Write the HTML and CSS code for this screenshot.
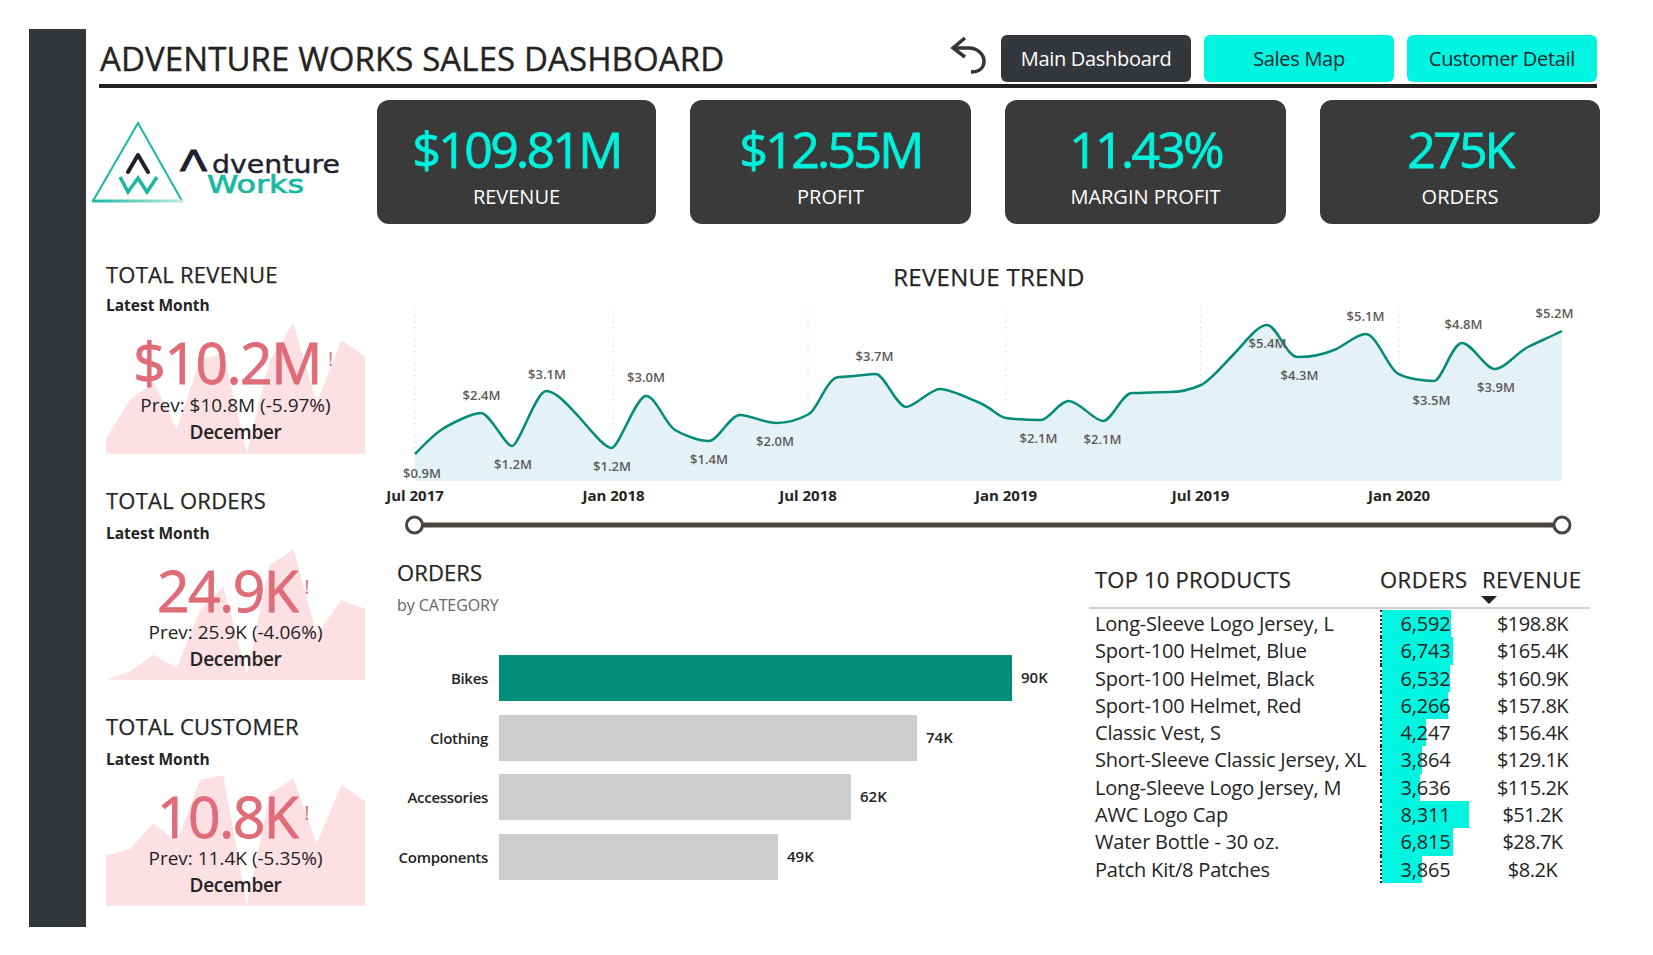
FILE: index.html
```html
<!DOCTYPE html>
<html>
<head>
    <meta charset="utf-8">
    <title>Adventure Works Sales Dashboard</title>
    <link rel="stylesheet" href="styles.css">
</head>
<body>
    <div class="sidebar"></div>
    <div class="main">
        <div class="header">
            <div class="title">ADVENTURE WORKS SALES DASHBOARD</div>
            <svg class="back" viewBox="0 0 36 37">
                <path d="M15 1 L3 11 L15 20 M3 11 H19 C28 11 34 18 34 24 C34 30 30 35 21 35"/>
            </svg>
            <div class="btn btn_dark">Main Dashboard</div>
            <div class="btn">Sales Map</div>
            <div class="btn">Customer Detail</div>
        </div>

        <div class="cards">
            <svg class="logo" viewBox="90 115 255 90">
                <defs>
                    <linearGradient id="logo_fade" x1="0" x2="1" y1="0" y2="0">
                        <stop offset="0" stop-color="#18b8a2"/>
                        <stop offset="1" stop-color="#bfe9e2"/>
                    </linearGradient>
                </defs>
                <path class="logo_tri" d="M93 201 L138 123 L182 201"/>
                <rect x="92" y="199.5" width="91" height="3" fill="url(#logo_fade)"/>
                <path class="logo_dark" d="M128 172 L138 155 L148 172"/>
                <path class="logo_teal" d="M120 177 L128 192 L138 178 L147 192 L157 177"/>
                <text class="logo_big" x="180" y="171" textLength="27" lengthAdjust="spacingAndGlyphs">Λ</text>
                <text class="logo_adv" x="212" y="173" textLength="128" lengthAdjust="spacingAndGlyphs">dventure</text>
                <text class="logo_works" x="207" y="193" textLength="97" lengthAdjust="spacingAndGlyphs">Works</text>
            </svg>
            <div class="card"><div class="card_value">$109.81M</div><div class="card_label">REVENUE</div></div>
            <div class="card"><div class="card_value">$12.55M</div><div class="card_label">PROFIT</div></div>
            <div class="card"><div class="card_value">11.43%</div><div class="card_label">MARGIN PROFIT</div></div>
            <div class="card"><div class="card_value">275K</div><div class="card_label">ORDERS</div></div>
        </div>

        <div class="content">
            <div class="tiles">
                <div class="tile">
                    <div class="tile_title">TOTAL REVENUE</div>
                    <div class="tile_sub">Latest Month</div>
                    <div class="spark">
                        <svg viewBox="48 219 777 393" preserveAspectRatio="none"><polygon points="48,611 48,565 120,450 190,395 260,537 330,330 400,310 470,610 540,330 610,220 680,460 755,270 825,320 825,611"/></svg>
                        <div class="tile_value">$10.2M<span class="warn">!</span></div>
                        <div class="tile_prev">Prev: $10.8M (-5.97%)</div>
                        <div class="tile_month">December</div>
                    </div>
                </div>
                <div class="tile">
                    <div class="tile_title">TOTAL ORDERS</div>
                    <div class="tile_sub">Latest Month</div>
                    <div class="spark">
                        <svg viewBox="48 207 777 391" preserveAspectRatio="none"><polygon points="48,597 120,573 190,523 260,562 330,390 400,320 470,580 540,255 610,208 680,460 755,360 825,385 825,597"/></svg>
                        <div class="tile_value">24.9K<span class="warn">!</span></div>
                        <div class="tile_prev">Prev: 25.9K (-4.06%)</div>
                        <div class="tile_month">December</div>
                    </div>
                </div>
                <div class="tile">
                    <div class="tile_title">TOTAL CUSTOMER</div>
                    <div class="tile_sub">Latest Month</div>
                    <div class="spark">
                        <svg viewBox="48 886 777 392" preserveAspectRatio="none"><polygon points="48,1277 48,1127 120,1108 190,1030 260,1085 330,900 400,887 470,1275 540,940 610,897 680,1090 755,915 825,965 825,1277"/></svg>
                        <div class="tile_value">10.8K<span class="warn">!</span></div>
                        <div class="tile_prev">Prev: 11.4K (-5.35%)</div>
                        <div class="tile_month">December</div>
                    </div>
                </div>
            </div>

            <div class="right">
                <div class="trend_title">REVENUE TREND</div>
                <svg class="trend" viewBox="380 295 1220 240">
                    <g class="grid">
                        <line x1="415" x2="415" y1="309" y2="481"/>
                        <line x1="613.5" x2="613.5" y1="309" y2="481"/>
                        <line x1="808" x2="808" y1="309" y2="481"/>
                        <line x1="1006" x2="1006" y1="309" y2="481"/>
                        <line x1="1200.5" x2="1200.5" y1="309" y2="481"/>
                        <line x1="1399" x2="1399" y1="309" y2="481"/>
                    </g>
                    <path class="area" d="M415 454 C425 444 432 436 441 430 S472 413 481 413 S505 446 512 446 S536 391 546 391 S568 405 579 417 S604 448 611.5 448 S636 396 646 396 S665 424 675 430 S700 441 709 441 S730 415 740 415 S765 423 776 423 S800 419 809 414 S827 377 839 377 S868 374 876 374 S897 407 906 407 S930 389 940 389 S968 398 980 403 S998 417 1006 418 S1033 420 1041 420 S1059 401 1069 401 S1094 421 1103 421 S1122 393 1132 393 S1160 392 1170 392 S1192 389 1201 385 S1222 366 1233 355 S1257 325 1267 325 S1286 357 1298 357 S1322 355 1334 350 S1356 334 1366 334 S1388 367 1397 373 S1426 381 1434 381 S1452 343 1462 343 S1485 369 1495 369 S1516 353 1528 347 S1550 337 1562 331 L1562 481 L415 481 Z"/>
                    <path class="line" d="M415 454 C425 444 432 436 441 430 S472 413 481 413 S505 446 512 446 S536 391 546 391 S568 405 579 417 S604 448 611.5 448 S636 396 646 396 S665 424 675 430 S700 441 709 441 S730 415 740 415 S765 423 776 423 S800 419 809 414 S827 377 839 377 S868 374 876 374 S897 407 906 407 S930 389 940 389 S968 398 980 403 S998 417 1006 418 S1033 420 1041 420 S1059 401 1069 401 S1094 421 1103 421 S1122 393 1132 393 S1160 392 1170 392 S1192 389 1201 385 S1222 366 1233 355 S1257 325 1267 325 S1286 357 1298 357 S1322 355 1334 350 S1356 334 1366 334 S1388 367 1397 373 S1426 381 1434 381 S1452 343 1462 343 S1485 369 1495 369 S1516 353 1528 347 S1550 337 1562 331"/>
                    <g class="point">
                        <text x="422" y="478">$0.9M</text>
                        <text x="481.5" y="400">$2.4M</text>
                        <text x="513" y="469">$1.2M</text>
                        <text x="547" y="379">$3.1M</text>
                        <text x="612" y="471">$1.2M</text>
                        <text x="646" y="382">$3.0M</text>
                        <text x="709" y="464">$1.4M</text>
                        <text x="775" y="446">$2.0M</text>
                        <text x="874.5" y="361">$3.7M</text>
                        <text x="1038.5" y="443">$2.1M</text>
                        <text x="1102.5" y="444">$2.1M</text>
                        <text x="1267.5" y="348">$5.4M</text>
                        <text x="1299.5" y="380">$4.3M</text>
                        <text x="1365.5" y="321">$5.1M</text>
                        <text x="1431.5" y="405">$3.5M</text>
                        <text x="1463.5" y="329">$4.8M</text>
                        <text x="1496" y="392">$3.9M</text>
                        <text x="1554.5" y="318">$5.2M</text>
                    </g>
                    <g class="axis">
                        <text x="415" y="501">Jul 2017</text>
                        <text x="613.5" y="501">Jan 2018</text>
                        <text x="808" y="501">Jul 2018</text>
                        <text x="1006" y="501">Jan 2019</text>
                        <text x="1200.5" y="501">Jul 2019</text>
                        <text x="1399" y="501">Jan 2020</text>
                    </g>
                    <line class="slider" x1="415" x2="1562" y1="525" y2="525"/>
                    <circle class="knob" cx="414.5" cy="525" r="8"/>
                    <circle class="knob" cx="1562" cy="525" r="8"/>
                </svg>

                <div class="bottom">
                    <div class="orders">
                        <div class="orders_title">ORDERS</div>
                        <div class="orders_sub">by CATEGORY</div>
                        <div class="bars">
                            <div class="bar_row"><span class="bar_label">Bikes</span><span class="bar bar_on" style="width: 513px;"></span><span class="bar_value">90K</span></div>
                            <div class="bar_row"><span class="bar_label">Clothing</span><span class="bar" style="width: 418px;"></span><span class="bar_value">74K</span></div>
                            <div class="bar_row"><span class="bar_label">Accessories</span><span class="bar" style="width: 352px;"></span><span class="bar_value">62K</span></div>
                            <div class="bar_row"><span class="bar_label">Components</span><span class="bar" style="width: 279px;"></span><span class="bar_value">49K</span></div>
                        </div>
                    </div>

                    <div class="products">
                        <div class="prod_head">
                            <div class="prod_name">TOP 10 PRODUCTS</div>
                            <div class="prod_orders">ORDERS</div>
                            <div class="prod_rev">REVENUE<i class="caret"></i></div>
                        </div>
                        <div class="prod_body">
                            <div class="prod_row"><div class="prod_name">Long-Sleeve Logo Jersey, L</div><div class="prod_orders"><i class="fill" style="width: 79.3%;"></i><b>6,592</b></div><div class="prod_rev">$198.8K</div></div>
                            <div class="prod_row"><div class="prod_name">Sport-100 Helmet, Blue</div><div class="prod_orders"><i class="fill" style="width: 81.1%;"></i><b>6,743</b></div><div class="prod_rev">$165.4K</div></div>
                            <div class="prod_row"><div class="prod_name">Sport-100 Helmet, Black</div><div class="prod_orders"><i class="fill" style="width: 78.6%;"></i><b>6,532</b></div><div class="prod_rev">$160.9K</div></div>
                            <div class="prod_row"><div class="prod_name">Sport-100 Helmet, Red</div><div class="prod_orders"><i class="fill" style="width: 75.4%;"></i><b>6,266</b></div><div class="prod_rev">$157.8K</div></div>
                            <div class="prod_row"><div class="prod_name">Classic Vest, S</div><div class="prod_orders"><i class="fill" style="width: 51.1%;"></i><b>4,247</b></div><div class="prod_rev">$156.4K</div></div>
                            <div class="prod_row"><div class="prod_name">Short-Sleeve Classic Jersey, XL</div><div class="prod_orders"><i class="fill" style="width: 46.5%;"></i><b>3,864</b></div><div class="prod_rev">$129.1K</div></div>
                            <div class="prod_row"><div class="prod_name">Long-Sleeve Logo Jersey, M</div><div class="prod_orders"><i class="fill" style="width: 43.8%;"></i><b>3,636</b></div><div class="prod_rev">$115.2K</div></div>
                            <div class="prod_row"><div class="prod_name">AWC Logo Cap</div><div class="prod_orders"><i class="fill" style="width: 100%;"></i><b>8,311</b></div><div class="prod_rev">$51.2K</div></div>
                            <div class="prod_row"><div class="prod_name">Water Bottle - 30 oz.</div><div class="prod_orders"><i class="fill" style="width: 82%;"></i><b>6,815</b></div><div class="prod_rev">$28.7K</div></div>
                            <div class="prod_row"><div class="prod_name">Patch Kit/8 Patches</div><div class="prod_orders"><i class="fill" style="width: 46.5%;"></i><b>3,865</b></div><div class="prod_rev">$8.2K</div></div>
                        </div>
                    </div>
                </div>
            </div>
        </div>
    </div>
</body>
</html>
```

FILE: styles.css
```css
body {
    font-family: "Open Sans", "Noto Sans", sans-serif;
    color: #252423;
    background: #fff;
    margin: 0;
    padding: 29px 0 0 29px;
    display: flex;
    overflow: hidden;
}
.sidebar {
    width: 57px;
    height: 898px;
    background: #33363b;
    flex: none;
}
.main {
    width: 1501px;
    margin-left: 13px;
}

/* header */
.header {
    width: 1498px;
    height: 49px;
    padding: 6px 0 0;
    border-bottom: 4px solid #222;
    display: flex;
    box-sizing: content-box;
}
.title {
    font-size: 33px;
    line-height: 47px;
    margin-left: 1px;
    letter-spacing: 0.1px;
    white-space: nowrap;
    -webkit-text-stroke: 0.4px;
}
.back {
    width: 36px;
    height: 37px;
    margin: 2px 15px 0 auto;
    fill: none;
    stroke: #33363b;
    stroke-width: 3.5;
}
.btn {
    width: 190px;
    height: 47px;
    margin-left: 13px;
    line-height: 47px;
    font-size: 20px;
    letter-spacing: -0.3px;
    text-align: center;
    border-radius: 6px;
    background: #00f5e0;
    color: #1c2530;
}
.back + .btn {
    margin-left: 0;
}
.btn_dark {
    background: #33363b;
    color: #fff;
}

/* top cards */
.cards {
    display: grid;
    grid-template-columns: 244px 279px 281px 281px 280px;
    column-gap: 34px;
    margin-top: 12px;
    height: 124px;
}
.logo {
    width: 255px;
    height: 90px;
    margin: 15px 0 0 -9px;
}
.logo_tri {
    fill: none;
    stroke: #18b8a2;
    stroke-width: 2;
}
.logo_dark {
    fill: none;
    stroke: #1f1f2e;
    stroke-width: 4;
    stroke-linecap: round;
    stroke-linejoin: round;
}
.logo_teal {
    fill: none;
    stroke: #18b8a2;
    stroke-width: 3.5;
}
.logo_big {
    font-family: "DejaVu Sans", sans-serif;
    font-size: 28px;
    fill: #1f1f2e;
    stroke: #1f1f2e;
    stroke-width: 1;
}
.logo_adv {
    font-family: "DejaVu Sans", sans-serif;
    font-size: 24px;
    fill: #1f1f2e;
    stroke: #1f1f2e;
    stroke-width: 0.4;
}
.logo_works {
    font-family: "DejaVu Sans", sans-serif;
    font-size: 25px;
    fill: #18b8a2;
    stroke: #18b8a2;
    stroke-width: 0.7;
}
.card {
    background: #3a3a3a;
    border-radius: 12px;
    text-align: center;
    color: #fff;
}
.card_value {
    font-size: 50px;
    line-height: 62px;
    margin-top: 18px;
    letter-spacing: -2.7px;
    color: #00f0dc;
    -webkit-text-stroke: 0.8px;
}
.card_label {
    font-size: 20px;
    line-height: 26px;
    margin-top: 4px;
}

/* left tiles */
.content {
    display: flex;
}
.tiles {
    width: 271px;
    margin-left: 7px;
    padding-top: 35px;
    flex: none;
}
.tile {
    width: 259px;
    margin-bottom: 31px;
}
.tile_title {
    font-size: 22px;
    line-height: 30px;
    letter-spacing: 0.25px;
    -webkit-text-stroke: 0.25px;
}
.tile_sub {
    font-size: 15.5px;
    font-weight: 700;
    line-height: 20px;
    margin-top: 6px;
}
.spark {
    position: relative;
    height: 131px;
    margin-top: 8px;
    text-align: center;
}
.tile + .tile .tile_sub {
    margin-top: 8px;
}
.tile + .tile .spark {
    margin-top: 6px;
}
.spark svg {
    position: absolute;
    left: 0;
    top: 0;
    width: 100%;
    height: 100%;
    fill: #fde0e4;
}
.spark div {
    position: relative;
}
.tile_value {
    padding-top: 13px;
    font-size: 57px;
    line-height: 52px;
    letter-spacing: -1.5px;
    color: #e06c78;
    -webkit-text-stroke: 0.9px;
}
.tile + .tile .tile_value {
    padding-top: 15px;
}
.warn {
    font-size: 20px;
    line-height: 0;
    vertical-align: 18px;
    margin: 0 6px 0 7px;
    -webkit-text-stroke: 0;
}
.tile_prev {
    font-size: 19px;
    line-height: 27px;
    margin-top: 4px;
}
.tile + .tile .tile_prev {
    margin-top: 3px;
}
.tile_month {
    font-size: 19px;
    font-weight: 600;
    line-height: 26px;
    letter-spacing: -0.3px;
}

/* trend */
.right {
    width: 1220px;
    margin-left: 3px;
    flex: none;
}
.trend_title {
    text-align: center;
    font-size: 24px;
    line-height: 30px;
    letter-spacing: 0.3px;
    margin-top: 38px;
    width: 1218px;
    -webkit-text-stroke: 0.25px;
}
.trend {
    display: block;
    width: 1220px;
    height: 240px;
    margin-top: 3px;
}
.grid line {
    stroke: #cfcfcf;
    stroke-width: 1;
    stroke-dasharray: 1 5;
}
.area {
    fill: #e4f2f6;
}
.line {
    fill: none;
    stroke: #028b76;
    stroke-width: 2.5;
}
.point text {
    font-size: 13px;
    font-weight: 600;
    fill: #5f5a5a;
    text-anchor: middle;
}
.axis text {
    font-size: 15px;
    font-weight: 700;
    fill: #252423;
    text-anchor: middle;
}
.slider {
    stroke: #4a4541;
    stroke-width: 5;
}
.knob {
    fill: #fff;
    stroke: #4a4541;
    stroke-width: 3;
}

/* orders by category */
.bottom {
    display: flex;
    margin-top: 19px;
}
.orders {
    width: 692px;
    margin-left: 17px;
    flex: none;
}
.orders_title {
    font-size: 22px;
    line-height: 36px;
    letter-spacing: 0.1px;
    -webkit-text-stroke: 0.25px;
}
.orders_sub {
    font-size: 16px;
    line-height: 24px;
    margin-top: 3px;
    letter-spacing: -0.1px;
    color: #666;
}
.bars {
    margin-top: 38px;
    display: flex;
    flex-direction: column;
    gap: 13.5px;
}
.bar_row {
    display: flex;
    align-items: center;
    height: 46px;
    font-size: 15px;
    font-weight: 600;
}
.bar_label {
    width: 91px;
    margin-right: 11px;
    text-align: right;
    letter-spacing: -0.3px;
    white-space: nowrap;
}
.bar {
    height: 46px;
    background: #cdcdcd;
}
.bar_on {
    background: #028e78;
}
.bar_value {
    margin-left: 9px;
    margin-top: -2px;
}

/* products table */
.prod_head,
.prod_row {
    display: grid;
    grid-template-columns: 292px 102px 100px;
}
.prod_name {
    padding-left: 6px;
    white-space: nowrap;
}
.prod_head {
    width: 501px;
    height: 46px;
    padding-top: 7px;
    font-size: 22px;
    line-height: 36px;
    letter-spacing: 0.2px;
    border-bottom: 2px solid #d4d0d0;
    box-sizing: content-box;
    -webkit-text-stroke: 0.25px;
}
.prod_head .prod_orders {
    margin-left: -1px;
    letter-spacing: 0.5px;
}
.prod_rev {
    position: relative;
    text-align: center;
}
.prod_head .prod_rev {
    text-align: left;
    margin-left: -1px;
    letter-spacing: 0.5px;
    white-space: nowrap;
}
.caret {
    position: absolute;
    left: -1px;
    top: 35px;
    width: 0;
    height: 0;
    border: 8px solid transparent;
    border-top-color: #222;
    border-bottom: none;
}
.prod_body {
    padding-top: 1px;
}
.prod_row {
    height: 27.3px;
    font-size: 20px;
    line-height: 27.3px;
    letter-spacing: -0.2px;
}
.prod_row .prod_rev {
    letter-spacing: -0.5px;
    margin-left: -1px;
}
.prod_row .prod_orders {
    position: relative;
    width: 89px;
    box-sizing: border-box;
    text-align: center;
    border-left: 2px dotted #222;
    margin-left: -1px;
}
.fill {
    position: absolute;
    left: 0;
    top: 0;
    height: 100%;
    background: #00f5e0;
}
.prod_orders b {
    position: relative;
    font-weight: 400;
}
```
